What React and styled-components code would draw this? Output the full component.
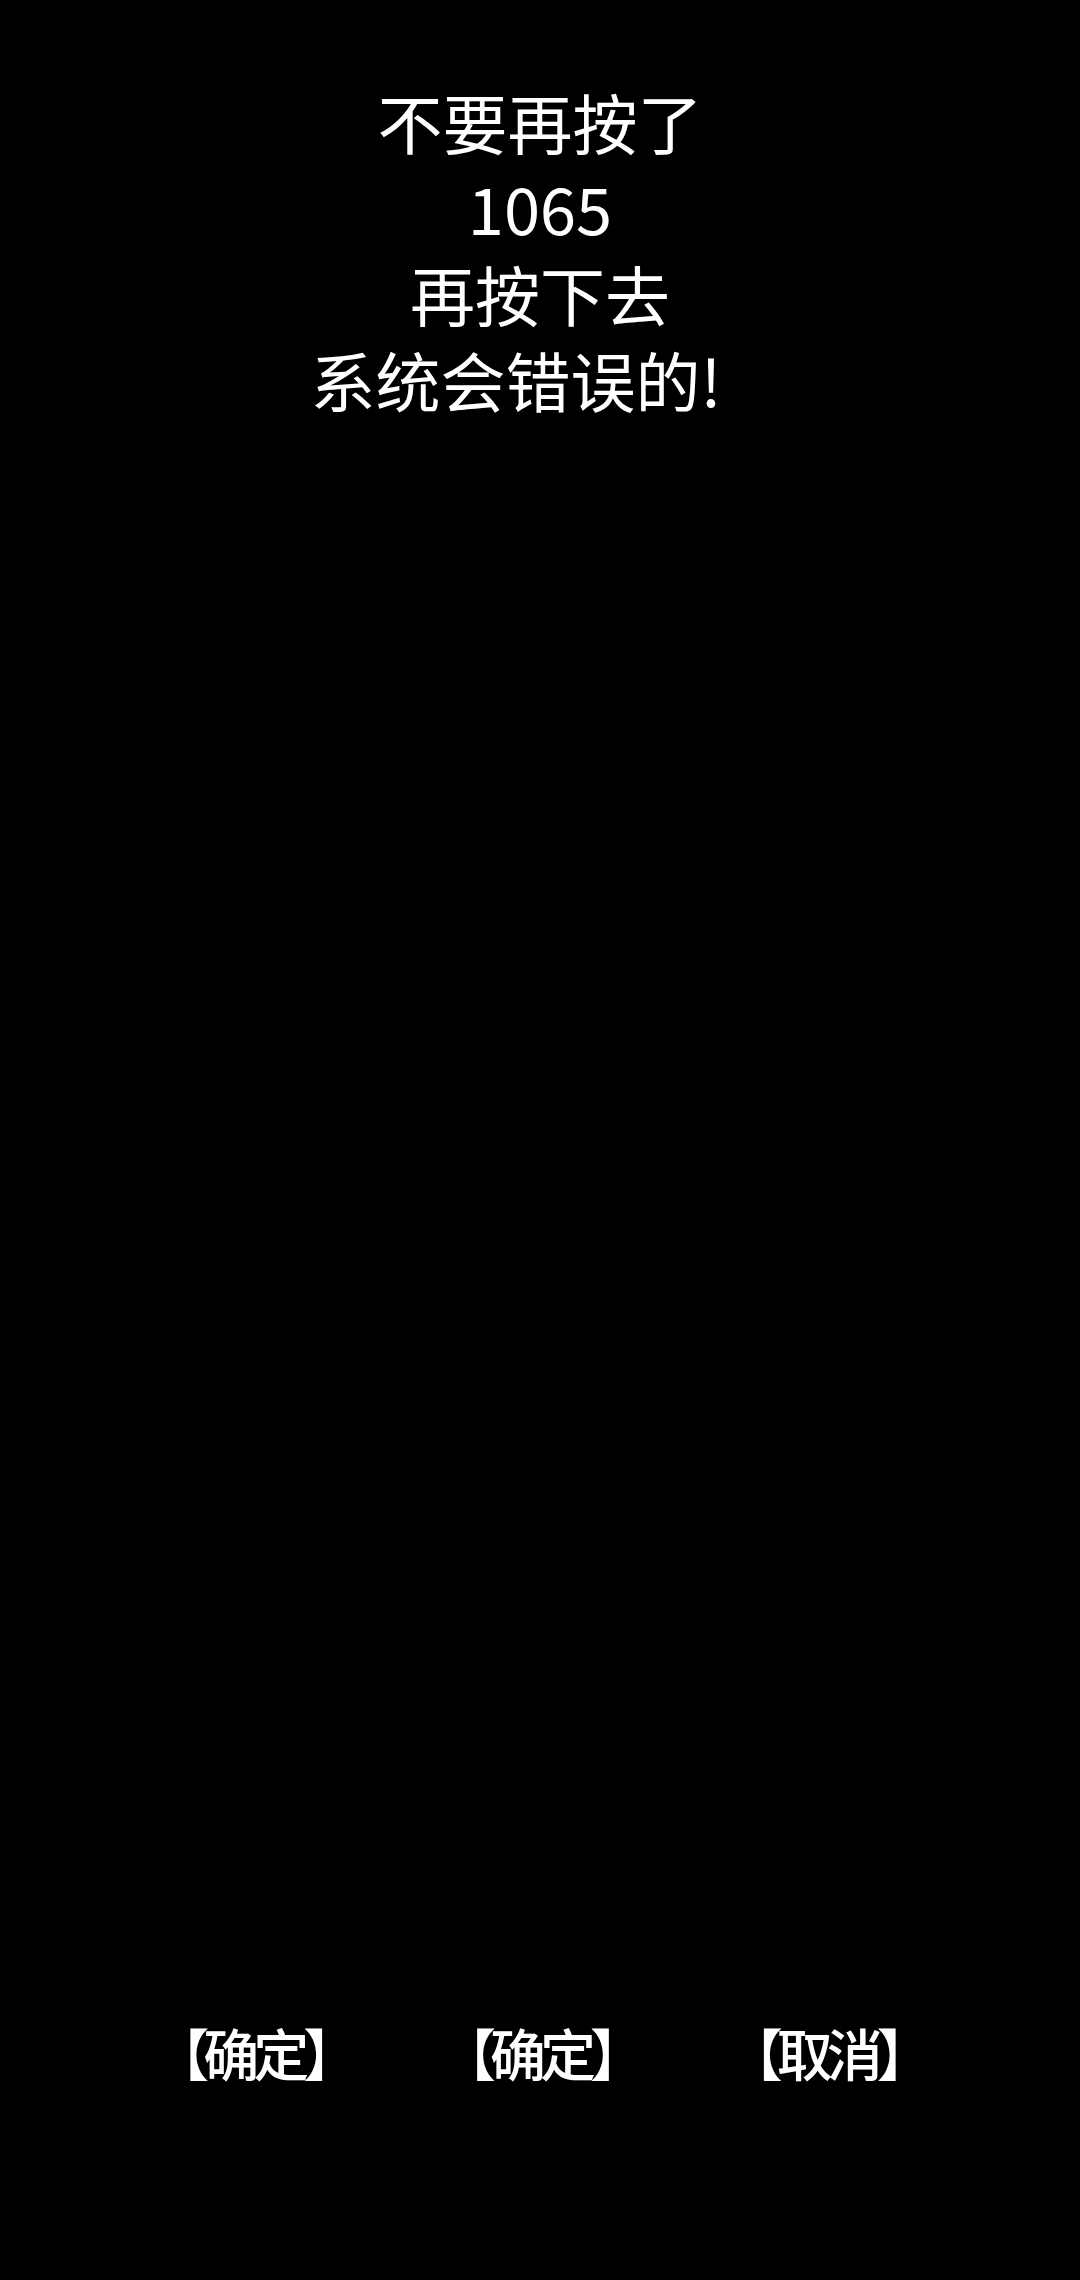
import styled, { createGlobalStyle } from 'styled-components';

const GlobalStyle = createGlobalStyle`
  html, body {
    margin: 0;
    padding: 0;
    background: #000;
  }
`;

const Screen = styled.div`
  width: 1080px;
  height: 2280px;
  background: #000;
  color: #fff;
  font-family: "Noto Sans CJK SC", "Noto Sans", sans-serif;
  display: flex;
  flex-direction: column;
  overflow: hidden;
`;

const Message = styled.div`
  padding-top: 78px;
  display: flex;
  flex-direction: column;
  align-items: center;
  flex: 1;
`;

const Line = styled.div`
  font-size: 65px;
  line-height: 86px;
  white-space: pre;
  transform: translateX(${(p) => p.$shift || 0}px);
`;

const Actions = styled.div`
  display: flex;
  padding: 0 110px 196px;
`;

const Action = styled.button`
  flex: 1;
  border: none;
  background: none;
  color: #fff;
  padding: 0;
  font-family: inherit;
  font-size: 56px;
  font-weight: 500;
  line-height: 64px;
  letter-spacing: -6px;
  cursor: pointer;
`;

export default function App() {
  return (
    <>
      <GlobalStyle />
      <Screen>
        <Message>
          <Line>不要再按了</Line>
          <Line>1065</Line>
          <Line>再按下去</Line>
          <Line $shift={-24}>系统会错误的!</Line>
        </Message>
        <Actions>
          <Action>【确定】</Action>
          <Action>【确定】</Action>
          <Action>【取消】</Action>
        </Actions>
      </Screen>
    </>
  );
}
